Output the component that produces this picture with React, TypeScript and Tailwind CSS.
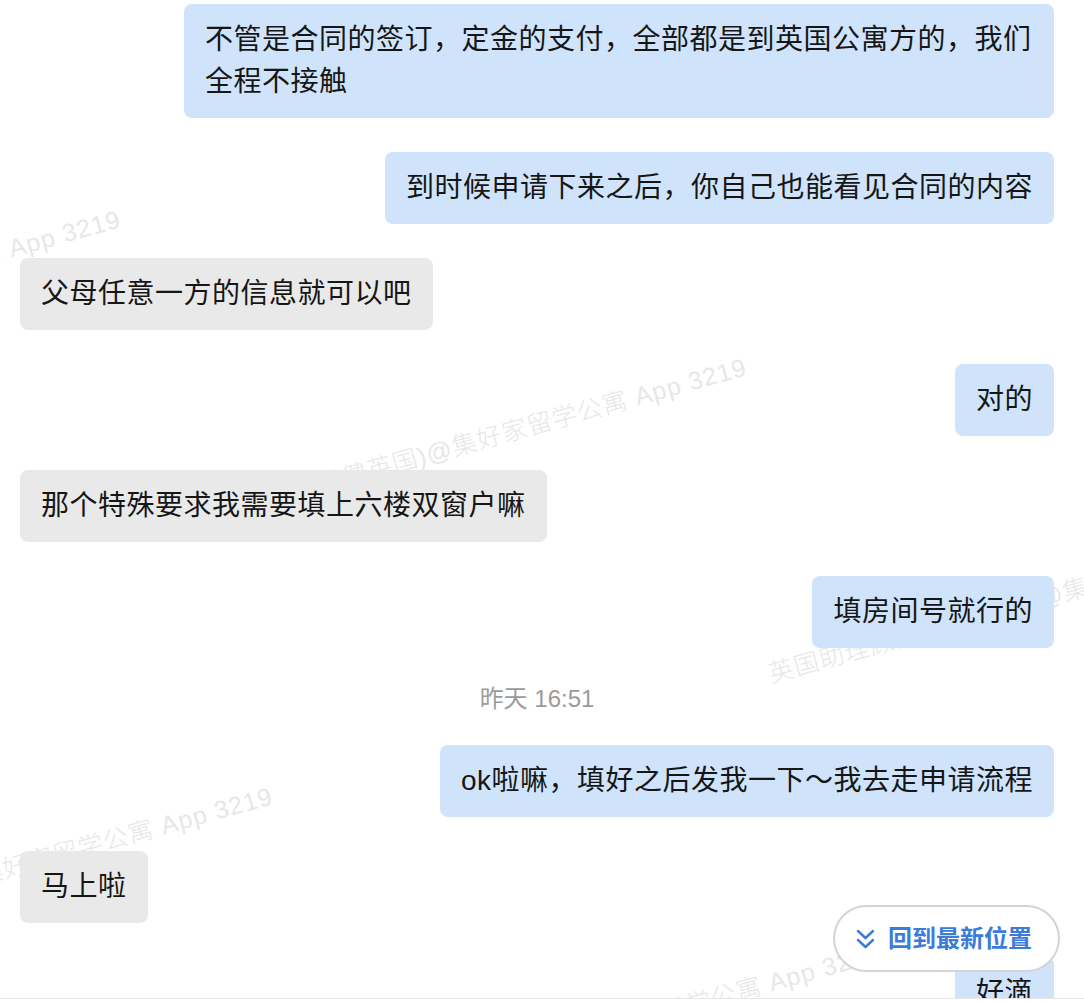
import React from "react";

const watermark = "英国助理顾问(张健英国)@集好家留学公寓 App 3219";

// end points of each watermark line (the "9" of 3219)
const marks = [
  "left-[120px] top-[218px]",
  "left-[746px] top-[366px]",
  "left-[272px] top-[795px]",
  "left-[880px] top-[952px]",
  "left-[1357px] top-[511px]",
];

type Item = { me: boolean; text: string } | { time: string };

const messages: Item[] = [
  { me: true, text: "不管是合同的签订，定金的支付，全部都是到英国公寓方的，我们全程不接触" },
  { me: true, text: "到时候申请下来之后，你自己也能看见合同的内容" },
  { me: false, text: "父母任意一方的信息就可以吧" },
  { me: true, text: "对的" },
  { me: false, text: "那个特殊要求我需要填上六楼双窗户嘛" },
  { me: true, text: "填房间号就行的" },
  { time: "昨天 16:51" },
  { me: true, text: "ok啦嘛，填好之后发我一下～我去走申请流程" },
  { me: false, text: "马上啦" },
  { me: true, text: "好滴" },
];

const Bubble = ({ me, text }: { me: boolean; text: string }) => (
  <div className={me ? "flex justify-end" : "flex justify-start"}>
    <div
      className={
        (me ? "bg-[#cfe4fa] " : "bg-[#e9e9e9] ") +
        "max-w-[870px] rounded-lg px-[21px] py-[15px] text-[28px] leading-[42px] tracking-[0.5px] text-[#161616]"
      }
    >
      {text}
    </div>
  </div>
);

const App = () => {
  return (
    <div className="w-[1084px] bg-white font-['Liberation_Sans','Noto_Sans_CJK_SC',sans-serif]">
      <div className="relative h-[998px] overflow-hidden">
        {marks.map((pos) => (
          <div key={pos} className={"absolute h-0 w-0 " + pos}>
            <span className="absolute top-[-13px] right-0 origin-right rotate-[-15.5deg] whitespace-nowrap text-[25px] leading-[26px] font-light tracking-[1px] text-[#e7e7e7]">
              {watermark}
            </span>
          </div>
        ))}

        <div className="relative flex flex-col gap-[34px] pt-[4px] pr-[30px] pl-[20px]">
          {messages.map((m, i) =>
            "time" in m ? (
              <div key={i} className="h-[29px] pt-[2px] text-center text-[24px] leading-[29px] text-[#9b9b9b]">
                {m.time}
              </div>
            ) : (
              <Bubble key={i} me={m.me} text={m.text} />
            )
          )}
        </div>

        <button className="absolute right-[24px] bottom-[26px] flex h-[67px] w-[227px] items-center gap-[13px] rounded-full border-2 border-[#d4d4d4] bg-white pl-[21px] text-[24px] font-bold text-[#3c7bd8]">
          <svg width="19" height="22" viewBox="0 0 19 22" fill="none" stroke="currentColor" strokeWidth="2.4" strokeLinecap="round" strokeLinejoin="round">
            <path d="M2 3 L9.5 10 L17 3" />
            <path d="M2 12 L9.5 19 L17 12" />
          </svg>
          <span>回到最新位置</span>
        </button>
      </div>
      <div className="h-[6px] border-t border-[#e6e6e6] bg-white" />
    </div>
  );
};

export default App;
